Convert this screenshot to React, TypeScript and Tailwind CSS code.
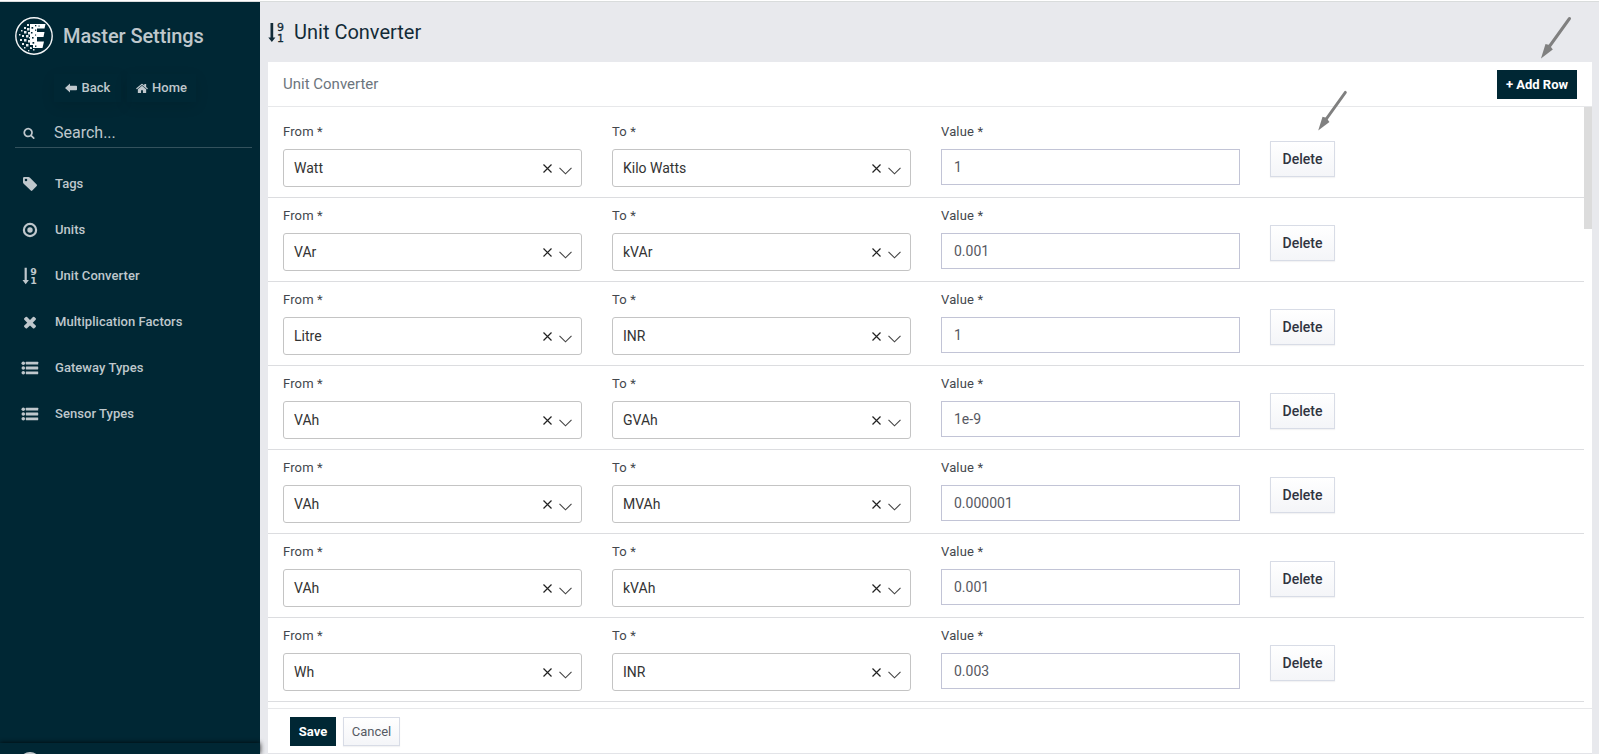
import React from "react";

type IconProps = { className?: string };

const SortIcon = ({ className }: IconProps) => (
  <svg viewBox="0 0 16 18" className={className} fill="currentColor">
    <path d="M2.600 0.800h2.200v12.200h2.100L3.700 17.200 0.500 13h2.100z" />
    <text x="8.200" y="7.900" fontSize="9.500" fontWeight="700" fontFamily="DejaVu Sans, sans-serif">9</text>
    <text x="8.200" y="17" fontSize="9.500" fontWeight="700" fontFamily="DejaVu Sans, sans-serif">1</text>
  </svg>
);

const ThinSortIcon = ({ className }: IconProps) => (
  <svg viewBox="0 0 20 25" className={className} fill="currentColor">
    <path d="M2.500 3h2.700v14.600h2.200L3.850 22 0.300 17.600h2.200z" />
    <text x="9" y="10.500" fontSize="11" stroke="currentColor" strokeWidth="0.3" fontFamily="DejaVu Sans, sans-serif">9</text>
    <text x="9" y="22" fontSize="11" stroke="currentColor" strokeWidth="0.3" fontFamily="DejaVu Sans, sans-serif">1</text>
  </svg>
);

const TagIcon = ({ className }: IconProps) => (
  <svg viewBox="0 0 16 16" className={className} fill="currentColor">
    <path fillRule="evenodd" d="M1 2.200Q1 1 2.200 1H6.400Q7.300 1 8 1.700L14.700 8.600Q15.400 9.400 14.700 10.100L10.300 14.600Q9.500 15.300 8.800 14.600L1.700 7.700Q1 7 1 6.200ZM4 2.700a1.300 1.300 0 1 0 0 2.600a1.300 1.300 0 1 0 0-2.600Z" />
  </svg>
);

const TargetIcon = ({ className }: IconProps) => (
  <svg viewBox="0 0 16 16" className={className}>
    <circle cx="8" cy="8" r="6.100" fill="none" stroke="currentColor" strokeWidth="2.200" />
    <circle cx="8" cy="8" r="2.700" fill="currentColor" />
  </svg>
);

const TimesIcon = ({ className }: IconProps) => (
  <svg viewBox="0 0 1792 1792" className={className} fill="currentColor">
    <path d="M1490 1322q0 40-28 68l-136 136q-28 28-68 28t-68-28l-294-294-294 294q-28 28-68 28t-68-28l-136-136q-28-28-28-68t28-68l294-294-294-294q-28-28-28-68t28-68l136-136q28-28 68-28t68 28l294 294 294-294q28-28 68-28t68 28l136 136q28 28 28 68t-28 68l-294 294 294 294q28 28 28 68z" />
  </svg>
);

const ListIcon = ({ className }: IconProps) => (
  <svg viewBox="0 0 18 16" className={className} fill="currentColor">
    {[3.2, 8, 12.8].map((y) => (
      <g key={y}>
        <circle cx="2.300" cy={y} r="1.800" />
        <rect x="4.800" y={y - 1.4} width="12.400" height="2.800" rx="0.4" />
      </g>
    ))}
  </svg>
);

const SearchIcon = ({ className }: IconProps) => (
  <svg viewBox="0 0 1792 1792" className={className} fill="currentColor">
    <path d="M1216 832q0-185-131.500-316.500t-316.500-131.500-316.500 131.500-131.500 316.500 131.500 316.500 316.500 131.500 316.500-131.500 131.500-316.500zm512 832q0 52-38 90t-90 38q-54 0-90-38l-343-342q-179 124-399 124-143 0-273.500-55.500t-225-150-150-225-55.500-273.500 55.500-273.500 150-225 225-150 273.500-55.500 273.500 55.500 225 150 150 225 55.500 273.500q0 220-124 399l343 343q37 37 37 90z" />
  </svg>
);

const HomeIcon = ({ className }: IconProps) => (
  <svg viewBox="0 0 1664 1792" className={className} fill="currentColor">
    <path d="M1408 992v480q0 26-19 45t-45 19h-384v-384h-256v384h-384q-26 0-45-19t-19-45v-480q0-1 .5-3t.5-3l575-474 575 474q1 2 1 6zm223-69l-62 74q-8 9-21 11h-3q-13 0-21-7l-692-577-692 577q-12 8-24 7-13-2-21-11l-62-74q-8-10-7-23.500t11-21.500l719-599q32-26 76-26t76 26l244 204v-195q0-14 9-23t23-9h192q14 0 23 9t9 23v408l219 182q10 8 11 21.500t-7 23.500z" />
  </svg>
);

const BackIcon = ({ className }: IconProps) => (
  <svg viewBox="0 0 12 10" className={className} fill="currentColor">
    <path d="M0 5L5 0.500V2.700H11.200Q12 2.700 12 3.500V6.500Q12 7.300 11.200 7.300H5V9.500Z" />
  </svg>
);

const specks = [
  [12, 7, 2], [9, 10, 2], [12, 11, 2.5], [6, 13, 1.5], [9, 14, 2.5], [13, 15, 2.5], [4, 17, 1.5],
  [7, 18, 2], [11, 18, 2.5], [5, 22, 2], [9, 22, 2.5], [13, 23, 2.5], [7, 26, 2], [11, 27, 2.5],
  [15, 30, 2], [9, 30, 1.5], [18, 32, 1.5], [14, 20, 1.5], [13, 33, 1.3],
];
const holes = [
  [16.5, 10, 1.7], [20, 8, 1.3], [16, 15, 1.5], [20, 12.5, 1.3], [17, 20, 1.6], [20, 17.5, 1.1],
  [17.5, 25, 1.7], [20, 28.5, 1.4], [23.5, 8.5, 1.1], [16, 29, 1.3],
];

const Logo = () => (
  <svg viewBox="0 0 38 38" className="h-[38px] w-[38px]">
    <circle cx="19" cy="19" r="18.200" fill="none" stroke="#f4f6f7" strokeWidth="1.400" />
    <path fill="#fff" d="M15 7H30.500L29.500 11.500H22V15H29.500L28.500 20H22V24.500H29L27.500 31H18V28H15V22H15V14H15Z" />
    <g fill="#e8ecee">
      {specks.map(([x, y, s], i) => <rect key={i} x={x} y={y} width={s} height={s} />)}
    </g>
    <g fill="#002734">
      {holes.map(([x, y, s], i) => <rect key={i} x={x} y={y} width={s} height={s} />)}
    </g>
  </svg>
);

const menu = [
  { label: "Tags", Icon: TagIcon, size: "h-4 w-4" },
  { label: "Units", Icon: TargetIcon, size: "h-4 w-4" },
  { label: "Unit Converter", Icon: SortIcon, size: "h-[18px] w-4" },
  { label: "Multiplication Factors", Icon: TimesIcon, size: "h-[18px] w-[18px]" },
  { label: "Gateway Types", Icon: ListIcon, size: "h-4 w-[18px]" },
  { label: "Sensor Types", Icon: ListIcon, size: "h-4 w-[18px]" },
];

const rows = [
  ["Watt", "Kilo Watts", "1"],
  ["VAr", "kVAr", "0.001"],
  ["Litre", "INR", "1"],
  ["VAh", "GVAh", "1e-9"],
  ["VAh", "MVAh", "0.000001"],
  ["VAh", "kVAh", "0.001"],
  ["Wh", "INR", "0.003"],
];

const Label = ({ children }: { children: string }) => (
  <div className="h-[35px] pt-[9px] text-[13px] leading-[18px] tracking-[0.15px] text-[#43474d]">{children} *</div>
);

const Select = ({ label, value }: { label: string; value: string }) => (
  <div className="w-[299px]">
    <Label>{label}</Label>
    <div className="flex h-[38px] items-center rounded-[3px] border border-[#c4c4c4] pr-[9px] pl-[10px] text-[14px] text-[#333]">
      <span className="flex-1">{value}</span>
      <svg viewBox="0 0 9 9" className="mt-px mr-[7px] h-[9px] w-[9px]" fill="none" stroke="#222" strokeWidth="1.200">
        <path d="M0.500 0.500L8.500 8.500M8.500 0.500L0.500 8.500" />
      </svg>
      <svg viewBox="0 0 13 8" className="mt-[5px] h-2 w-[13px]" fill="none" stroke="#444" strokeWidth="1.100">
        <path d="M0.500 0.800L6.500 6.800L12.500 0.800" />
      </svg>
    </div>
  </div>
);

const Arrow = ({ className }: IconProps) => (
  <svg viewBox="0 0 32 43" className={className}>
    <path d="M29.500 2.500L9 31" stroke="#808080" strokeWidth="3" strokeLinecap="round" />
    <path d="M1 42.500L5.500 28L9.500 29L12.800 33.500Z" fill="#808080" />
  </svg>
);

export default function App() {
  return (
    <div className="relative flex h-[754px] w-[1599px] flex-col overflow-hidden bg-[#e8e9ed] font-['Roboto',sans-serif]">
      <div className="h-[2px] shrink-0 border-b border-[#d9dcdc] bg-white" />
      <div className="flex min-h-0 flex-1">
        <aside className="flex w-[260px] shrink-0 flex-col bg-[#002734] text-[#bfc7cc]">
          <div className="flex h-[68px] items-center pl-[15px]">
            <Logo />
            <h1 className="ml-[10px] text-[20px] font-medium tracking-[-0.08px]">Master Settings</h1>
          </div>
          <div className="flex h-[32px] gap-[6px] pt-[4px] pl-[54px] text-[13px] font-medium">
            <button className="flex h-[28px] w-[67px] items-center justify-center gap-[5px] shadow-[0_4px_14px_rgba(0,0,0,0.100)]">
              <BackIcon className="h-[10px] w-[12px]" />
              Back
            </button>
            <button className="flex h-[28px] w-[69px] items-center justify-center gap-1 shadow-[0_4px_14px_rgba(0,0,0,0.100)]">
              <HomeIcon className="h-[13px] w-[12px]" />
              Home
            </button>
          </div>
          <div className="mt-[14px] ml-[15px] flex h-[32px] w-[237px] items-center border-b border-[#33525d] pt-[2px] pl-2">
            <SearchIcon className="h-[12px] w-[12px]" />
            <span className="ml-[19px] text-[16px]">Search...</span>
          </div>
          <nav className="mt-[13px] flex flex-1 flex-col">
            {menu.map(({ label, Icon, size }) => (
              <div key={label} className="flex h-[46px] items-center pl-[21px] text-[13px] font-medium">
                <span className="flex w-[18px] justify-center"><Icon className={size} /></span>
                <span className="ml-4 tracking-[0.05px]">{label}</span>
              </div>
            ))}
          </nav>
          <div className="relative flex h-[11px] shrink-0 overflow-visible bg-[#002734] pl-[19px] shadow-[0_0_5px_rgba(0,0,0,0.900)]">
            <div className="h-full w-[22px] overflow-hidden pt-[9px]">
              <div className="h-[22px] w-[22px] rounded-full bg-[#c5cacd]" />
            </div>
          </div>
        </aside>
        <main className="flex flex-1 flex-col pr-[7px] pl-2">
          <header className="flex h-[60px] shrink-0 items-center text-[#122b38]">
            <ThinSortIcon className="h-[25px] w-[20px]" />
            <h2 className="ml-[6px] text-[20px]">Unit Converter</h2>
          </header>
          <section className="flex min-h-0 flex-1 flex-col border-b border-[#e3e4e8] bg-white">
            <div className="flex h-[45px] shrink-0 items-center justify-between border-b border-[#e7e8ea] pr-[15px] pl-[15px]">
              <h3 className="text-[15px] text-[#6c757d]">Unit Converter</h3>
              <button className="h-[29px] w-[80px] bg-[#002734] pt-px text-[13px] font-bold text-white">+ Add Row</button>
            </div>
            <div className="flex h-[601px] shrink-0 justify-between overflow-hidden">
              <div className="w-[1316px] pt-[7px]">
                {rows.map(([from, to, value], i) => (
                  <div key={i} className="flex h-[84px] gap-[30px] border-b border-[#dcdde0] pl-[15px]">
                    <Select label="From" value={from} />
                    <Select label="To" value={to} />
                    <div className="w-[299px]">
                      <Label>Value</Label>
                      <div className="flex h-[36px] items-center border border-[#c2c4d6] pl-[12px] text-[14px] text-[#575962]">{value}</div>
                    </div>
                    <button className="mt-[27px] h-[36px] w-[65px] border border-[#d8dce6] bg-gradient-to-b from-white to-[#f4f5f8] text-[14px] font-medium text-[#30343f] shadow-[0_1px_1px_rgba(22,29,37,0.050)]">Delete</button>
                  </div>
                ))}
              </div>
              <div className="h-[122px] w-2 bg-[#dcdcdc]" />
            </div>
            <footer className="flex flex-1 gap-[7px] border-t border-[#e7e8ea] pt-[8px] pl-[22px] text-[13px]">
              <button className="h-[29px] w-[46px] bg-[#002734] font-bold text-white">Save</button>
              <button className="h-[29px] w-[57px] border border-[#d8dce6] bg-gradient-to-b from-white to-[#f4f5f8] text-[#555a63] shadow-[0_1px_1px_rgba(22,29,37,0.050)]">Cancel</button>
            </footer>
          </section>
        </main>
      </div>
      <Arrow className="absolute top-[16px] left-[1540px] h-[43px] w-[32px]" />
      <Arrow className="absolute top-[90px] left-[1317px] h-[41px] w-[31px]" />
    </div>
  );
}
